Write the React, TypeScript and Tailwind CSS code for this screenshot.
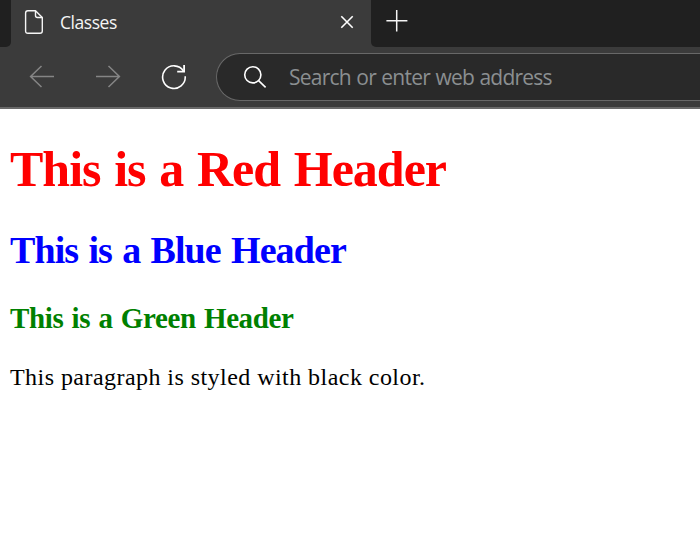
function TabBar() {
  return (
    <div className="flex h-[47px] bg-[#3b3b3b]">
      <div className="w-[11px] rounded-br-[5px] bg-[#202020]" />
      <div className="flex w-[360px] items-center pl-[13px] pr-[17px] pb-[3px]">
        <svg className="h-[26px] w-[20px]" viewBox="0 0 20 26" fill="none" stroke="#f5f5f5" strokeWidth="1.4" strokeLinejoin="round">
          <path d="M3.5 1.7H11.5L18.3 8.5V22Q18.3 24.3 16 24.3H3.9Q1.6 24.3 1.6 22V3.9Q1.6 1.7 3.8 1.7Z" />
          <path d="M11.5 1.7V6.5Q11.5 8.5 13.5 8.5H18.3" />
        </svg>
        <span className="ml-4 flex-1 font-['Open_Sans','Noto_Sans',sans-serif] text-[17.5px] leading-6 tracking-[-0.45px] text-[#f5f5f5]">Classes</span>
        <svg className="mb-px h-[14px] w-[14px]" viewBox="0 0 14 14" fill="none" stroke="#fff" strokeWidth="1.6">
          <path d="M1.3 1.3L12.7 12.7M12.7 1.3L1.3 12.7" />
        </svg>
      </div>
      <div className="flex-1 rounded-bl-[5px] bg-[#202020] pl-[15px] pt-[10px]">
        <svg className="h-[22px] w-[22px]" viewBox="0 0 22 22" fill="none" stroke="#f5f5f5" strokeWidth="1.5">
          <path d="M.4 10.7H21.4M10.7 0V21.4" />
        </svg>
      </div>
    </div>
  );
}

function Toolbar() {
  return (
    <div className="flex h-[62px] overflow-hidden border-b-2 border-[#696969] bg-[#3b3b3b] pt-[6px]">
      <div className="flex h-12 w-[216px] shrink-0 items-center pl-[29px]">
        <svg className="h-[24px] w-[26px]" viewBox="0 0 26 24" fill="none" stroke="#858585" strokeWidth="1.5">
          <path d="M25 11.5H1.6M12.5 1L1.6 11.5L12.5 22" />
        </svg>
        <svg className="ml-[40px] h-[24px] w-[26px]" viewBox="0 0 26 24" fill="none" stroke="#858585" strokeWidth="1.5">
          <path d="M1 11.5H24.4M13.5 1L24.4 11.5L13.5 22" />
        </svg>
        <svg className="ml-[40px] h-[26px] w-[26px]" viewBox="0 0 26 26" fill="none" stroke="#fff" strokeWidth="1.6">
          <path d="M24.2 12.2A11.3 11.3 0 1 1 22.5 7.1" />
          <path d="M23.1 1V7.7H16.2" strokeWidth="1.8" />
        </svg>
      </div>
      <div className="flex h-12 flex-1 items-center rounded-l-full border border-r-0 border-[#686868] bg-[#292929] pl-[26px]">
        <svg className="h-[24px] w-[24px] shrink-0" viewBox="0 0 24 24" fill="none" stroke="#fff" strokeWidth="1.6">
          <circle cx="9.8" cy="9.8" r="8.1" />
          <path d="M15.6 15.6L22.6 22.4" />
        </svg>
        <span className="ml-[22px] whitespace-nowrap font-['Open_Sans','Noto_Sans',sans-serif] text-[21px] leading-7 tracking-[-0.75px] [word-spacing:0.6px] text-[#8b8f91]">Search or enter web address</span>
      </div>
    </div>
  );
}

export default function App() {
  return (
    <div className="h-[553px] w-[700px] overflow-hidden bg-white">
      <TabBar />
      <Toolbar />
      <main className="whitespace-nowrap pl-[10px] pt-8 font-['Liberation_Serif','Times_New_Roman',serif]">
        <h1 className="text-[50px] font-bold leading-[56px] tracking-[-1px] [word-spacing:2.2px] text-[#ff0000]">This is a Red Header</h1>
        <h2 className="mt-[31px] text-[38px] font-bold leading-[44px] tracking-[-0.9px] [word-spacing:1.6px] text-[#0000ff]">This is a Blue Header</h2>
        <h3 className="mt-[29px] text-[29px] font-bold leading-[34px] tracking-[-0.38px] [word-spacing:1.4px] text-[#008000]">This is a Green Header</h3>
        <p className="mt-[28px] text-[24px] leading-[28px] tracking-[0.45px] text-black">This paragraph is styled with black color.</p>
      </main>
    </div>
  );
}
